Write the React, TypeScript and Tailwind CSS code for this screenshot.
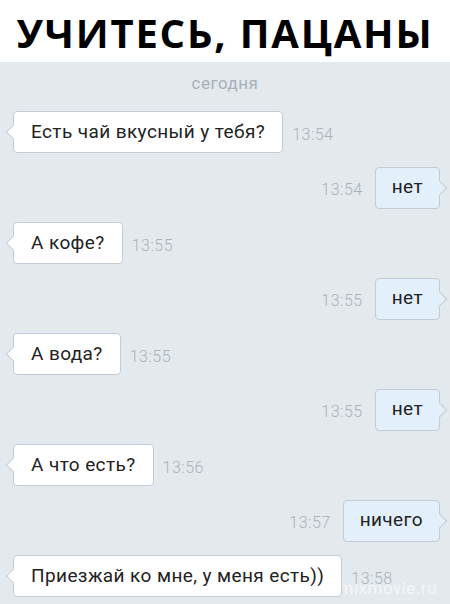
type Msg = { text: string; time: string; out?: boolean };

const messages: Msg[] = [
  { text: 'Есть чай вкусный у тебя?', time: '13:54' },
  { text: 'нет', time: '13:54', out: true },
  { text: 'А кофе?', time: '13:55' },
  { text: 'нет', time: '13:55', out: true },
  { text: 'А вода?', time: '13:55' },
  { text: 'нет', time: '13:55', out: true },
  { text: 'А что есть?', time: '13:56' },
  { text: 'ничего', time: '13:57', out: true },
  { text: 'Приезжай ко мне, у меня есть))', time: '13:58' },
];

function Bubble({ msg }: { msg: Msg }) {
  const time = (
    <span className="text-[16px] font-light tracking-[0.5px] text-[#aab1b9] pt-[5px]">{msg.time}</span>
  );

  if (msg.out) {
    return (
      <div className="flex items-center justify-end gap-[12px] pr-[10px]">
        {time}
        <div className="relative h-[42px] flex items-center px-[16px] rounded-[4px] border border-[#c3ccd6] bg-[#e3f0fb] text-[19px] tracking-[0.4px] text-[#222]">
          <span className="absolute right-[-6px] top-1/2 -translate-y-1/2 w-[11px] h-[11px] rotate-45 bg-[#e3f0fb] border-t border-r border-[#c3ccd6]" />
          <span className="relative">{msg.text}</span>
        </div>
      </div>
    );
  }

  return (
    <div className="flex items-center gap-[9px] pl-[13px]">
      <div className="relative h-[42px] flex items-center px-[17px] rounded-[4px] border border-[#c3ccd6] bg-white text-[19px] tracking-[0.4px] text-[#222]">
        <span className="absolute left-[-6px] top-1/2 -translate-y-1/2 w-[11px] h-[11px] rotate-45 bg-white border-b border-l border-[#c3ccd6]" />
        <span className="relative">{msg.text}</span>
      </div>
      {time}
    </div>
  );
}

export default function App() {
  return (
    <div className="w-[450px] h-[604px] overflow-hidden bg-[#e4e9ee] flex flex-col font-['Roboto',sans-serif]">
      <div className="h-[62px] bg-white flex items-center justify-center shrink-0 pt-[3px]">
        <h1 className="font-['Open_Sans',sans-serif] font-bold text-[40px] leading-none text-black tracking-[1.8px]">
          УЧИТЕСЬ, ПАЦАНЫ
        </h1>
      </div>

      <div className="relative flex-1 flex flex-col">
        <span className="absolute right-[13px] bottom-[3px] text-[17px] tracking-[0.5px] text-white/60">mixmovie.ru</span>
        <div className="pt-[11px] pb-[17px] text-center text-[17px] leading-[21px] tracking-[0.5px] text-[#a9b0b8]">
          сегодня
        </div>
        <div className="relative flex flex-col gap-[13.5px]">
          {messages.map((m, i) => (
            <Bubble key={i} msg={m} />
          ))}
        </div>
      </div>
    </div>
  );
}
